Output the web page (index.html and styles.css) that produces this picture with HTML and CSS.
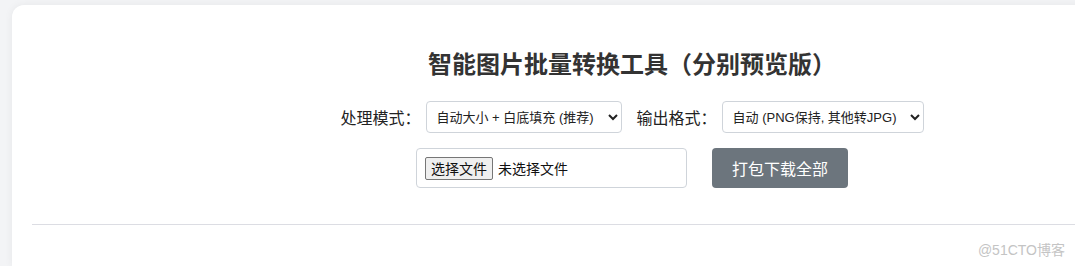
FILE: index.html
```html
<!DOCTYPE html>
<html lang="zh-CN">
<head>
<meta charset="utf-8">
<title>智能图片批量转换工具</title>
<link rel="stylesheet" href="styles.css">
</head>
<body>
<div class="card">
  <h1 class="title">智能图片批量转换工具（分别预览版）</h1>
  <div class="options">
    <label class="opt-label" for="mode">处理模式：</label>
    <select id="mode" class="opt-select opt-mode">
      <option>自动大小 + 白底填充 (推荐)</option>
    </select>
    <label class="opt-label" for="fmt">输出格式：</label>
    <select id="fmt" class="opt-select opt-fmt">
      <option>自动 (PNG保持, 其他转JPG)</option>
    </select>
  </div>
  <div class="actions">
    <div class="file-box">
      <label class="file-btn">选择文件<input type="file" class="file-input" multiple></label>
      <span class="file-status">未选择文件</span>
    </div>
    <button class="download-btn" type="button">打包下载全部</button>
  </div>
  <hr class="divider">
</div>
<div class="watermark">@51CTO博客</div>
</body>
</html>
```
FILE: styles.css
```css
html, body {
  margin: 0;
  padding: 0;
}
body {
  background: #f3f4f6;
  font-family: "Microsoft YaHei", "Noto Sans CJK SC", "Liberation Sans", sans-serif;
  color: #222;
  width: 1075px;
  height: 266px;
  overflow: hidden;
  position: relative;
}
.card {
  box-sizing: border-box;
  margin: 5px 0 0 12px;
  width: 1240px;
  height: 261px;
  background: #fff;
  border-radius: 12px 12px 0 0;
  box-shadow: 0 0 8px rgba(0, 0, 0, 0.06);
  padding: 0 20px;
  display: flex;
  flex-direction: column;
  align-items: center;
}
.title {
  margin: 40px 0 0;
  font-size: 24px;
  line-height: 36px;
  font-weight: 700;
  color: #333;
}
.options {
  margin-top: 20px;
  display: flex;
  align-items: center;
  font-size: 16px;
  color: #222;
}
.opt-label {
  margin-right: 5px;
}
.opt-select {
  box-sizing: border-box;
  height: 32px;
  padding: 0 0 0 6px;
  font-size: 13px;
  font-family: "Liberation Sans", "Noto Sans CJK SC", sans-serif;
  border: 1px solid #cfd4da;
  border-radius: 4px;
  background: #fff;
  color: #222;
}
.opt-mode {
  width: 196px;
  margin-right: 15px;
}
.opt-fmt {
  width: 202px;
}
.actions {
  margin-top: 15px;
  display: flex;
  align-items: center;
  gap: 25px;
}
.file-box {
  box-sizing: border-box;
  width: 271px;
  height: 40px;
  padding: 0 8px;
  border: 1px solid #cfd4da;
  border-radius: 4px;
  display: flex;
  align-items: center;
  gap: 5px;
  font-size: 14px;
  color: #111;
}
.file-btn {
  box-sizing: border-box;
  height: 23px;
  padding: 0 5px;
  display: flex;
  align-items: center;
  background: #efefef;
  border: 1px solid #767676;
  border-radius: 2px;
  font-size: 14px;
  color: #111;
}
.file-input {
  display: none;
}
.download-btn {
  height: 40px;
  width: 136px;
  border: none;
  border-radius: 4px;
  background: #6c757d;
  color: #fff;
  font-size: 16px;
  font-family: "Microsoft YaHei", "Noto Sans CJK SC", "Liberation Sans", sans-serif;
}
.divider {
  align-self: stretch;
  margin: 36px 0 0;
  border: none;
  border-top: 1px solid #dcdde3;
}
.watermark {
  position: absolute;
  right: 10px;
  top: 239px;
  font-size: 14px;
  color: #c4c4c4;
  font-family: "Liberation Sans", "Noto Sans CJK SC", sans-serif;
}
```
